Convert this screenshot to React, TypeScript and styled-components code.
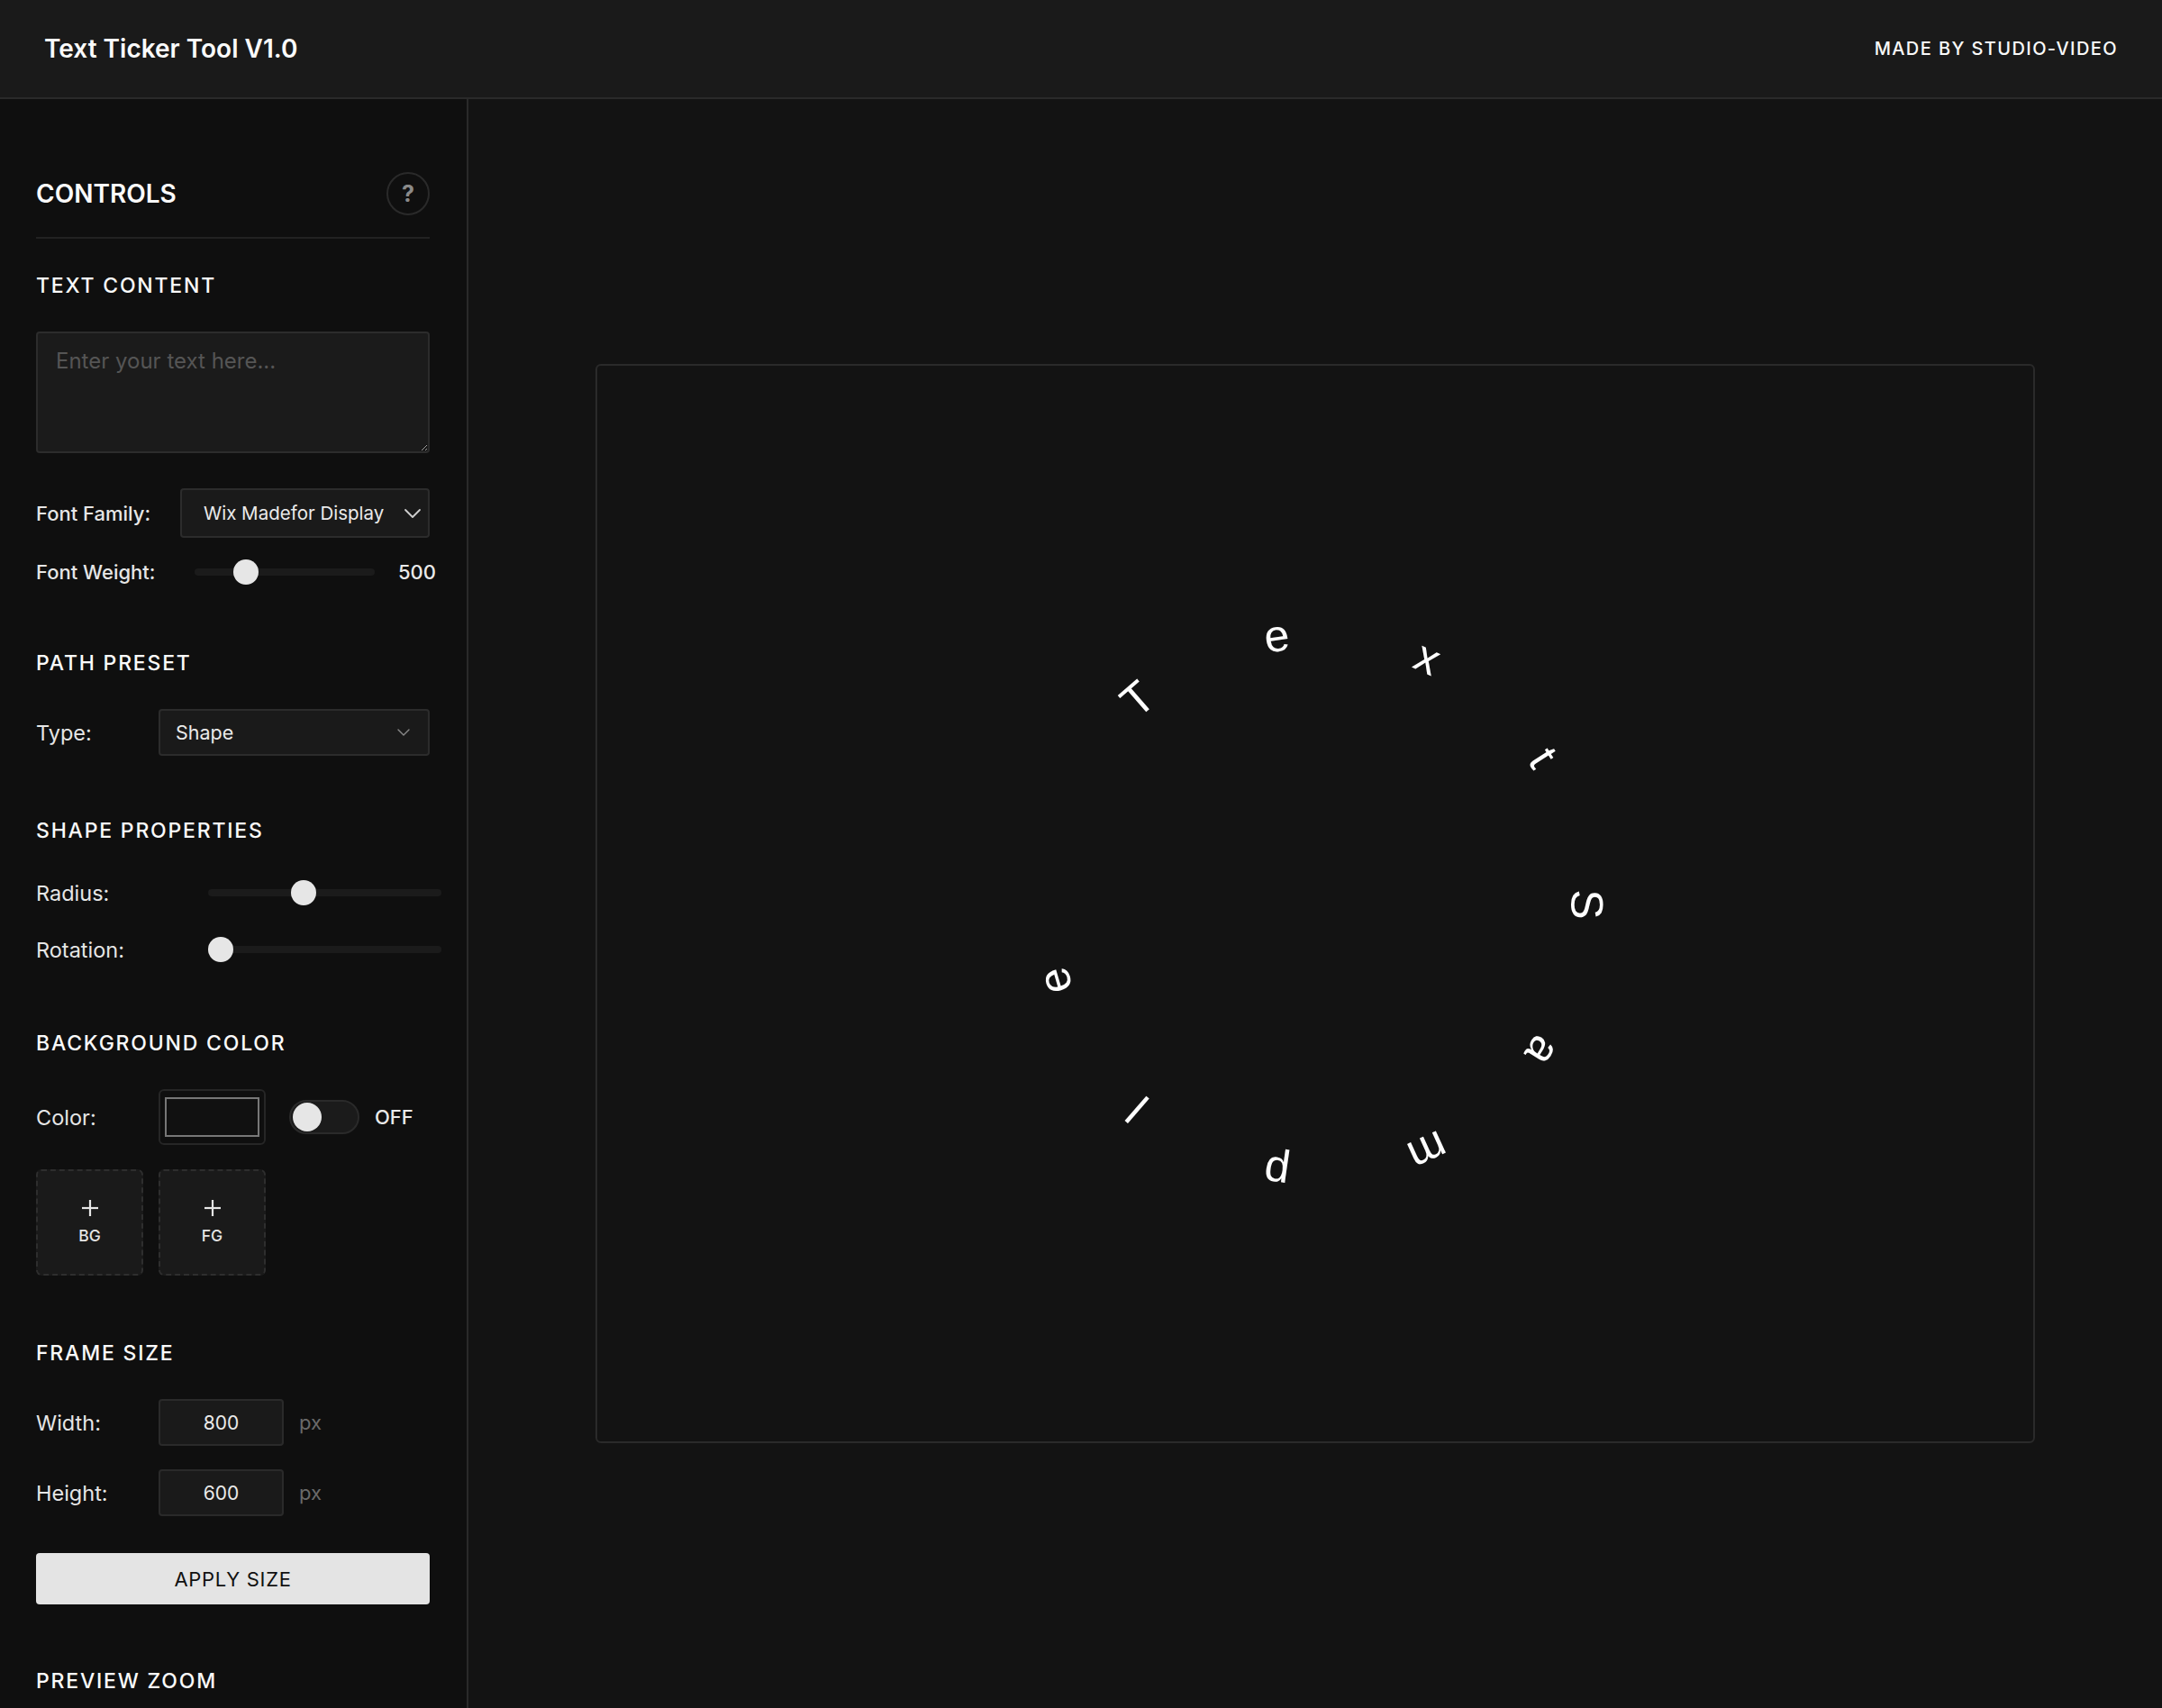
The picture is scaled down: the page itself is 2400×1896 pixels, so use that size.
import styled, { createGlobalStyle } from "styled-components";

const GlobalStyle = createGlobalStyle`
  html, body {
    margin: 0;
    padding: 0;
    background: #131313;
  }
  * {
    box-sizing: border-box;
  }
  body {
    font-family: Inter, "Noto Sans", sans-serif;
    color: #f2f2f2;
  }
`;

const Page = styled.div`
  height: 100vh;
  display: flex;
  flex-direction: column;
  overflow: hidden;
`;

const Header = styled.header`
  height: 110px;
  flex-shrink: 0;
  display: flex;
  align-items: center;
  justify-content: space-between;
  padding: 0 49px 0 49px;
  background: #1a1a1a;
  border-bottom: 2px solid #2a2a2a;
`;

const AppTitle = styled.h1`
  margin: 0;
  font-size: 28px;
  font-weight: 600;
  color: #fafafa;
`;

const Credit = styled.span`
  font-size: 20px;
  font-weight: 500;
  letter-spacing: 1.4px;
  color: #fafafa;
`;

const Body = styled.div`
  flex: 1;
  display: flex;
  min-height: 0;
`;

const Sidebar = styled.aside`
  width: 520px;
  flex-shrink: 0;
  background: #0f0f0f;
  border-right: 2px solid #2a2a2a;
  padding: 81px 41px 40px 40px;
  overflow: hidden;
`;

const PanelHeader = styled.div`
  display: flex;
  align-items: center;
  justify-content: space-between;
  padding-bottom: 24px;
  border-bottom: 2px solid #222;
`;

const PanelTitle = styled.h2`
  margin: 0;
  font-size: 28px;
  font-weight: 600;
  color: #fafafa;
`;

const HelpButton = styled.button`
  width: 48px;
  height: 48px;
  border-radius: 50%;
  border: 2px solid #2a2a2a;
  background: transparent;
  color: #8a8a8a;
  font-family: Inter, sans-serif;
  font-size: 25px;
  font-weight: 700;
  display: flex;
  align-items: center;
  justify-content: center;
  padding: 0;
`;

const Section = styled.section<{ $top: number }>`
  margin-top: ${({ $top }) => $top}px;
`;

const SectionTitle = styled.h3`
  margin: 0 0 36px;
  font-size: 23px;
  line-height: 30px;
  font-weight: 500;
  letter-spacing: 1.8px;
  color: #fafafa;
`;

const Stack = styled.div<{ $gap: number }>`
  display: flex;
  flex-direction: column;
  gap: ${({ $gap }) => $gap}px;
`;

const TextArea = styled.textarea`
  display: block;
  width: 100%;
  height: 135px;
  background: #1b1b1b;
  border: 2px solid #2c2c2c;
  border-radius: 4px;
  padding: 16px 20px;
  font-family: Inter, sans-serif;
  font-size: 24px;
  color: #eee;
  resize: vertical;
  outline: none;

  &::placeholder {
    color: #555;
  }
`;

const Row = styled.div<{ $height?: number }>`
  display: flex;
  align-items: center;
  height: ${({ $height }) => ($height ? `${$height}px` : "auto")};
`;

const Label = styled.label<{ $width: number; $strong?: boolean }>`
  width: ${({ $width }) => $width}px;
  flex-shrink: 0;
  font-size: ${({ $strong }) => ($strong ? "22px" : "23.5px")};
  font-weight: ${({ $strong }) => ($strong ? 500 : 400)};
  color: #e6e6e6;
`;

const SelectBox = styled.div<{ $width: number; $padLeft: number; $padRight: number; $size: number }>`
  width: ${({ $width }) => $width}px;
  flex-shrink: 0;
  height: 100%;
  display: flex;
  align-items: center;
  justify-content: space-between;
  padding: 0 ${({ $padRight }) => $padRight}px 0 ${({ $padLeft }) => $padLeft}px;
  background: #1a1a1a;
  border: 2px solid #2c2c2c;
  border-radius: 4px;
  font-size: ${({ $size }) => $size}px;
  color: #eaeaea;
  white-space: nowrap;

  svg {
    flex-shrink: 0;
  }
`;

const Range = styled.input.attrs({ type: "range" })<{ $width: number }>`
  -webkit-appearance: none;
  appearance: none;
  flex-shrink: 0;
  width: ${({ $width }) => $width}px;
  height: 28px;
  margin: 0;
  background: transparent;

  &::-webkit-slider-runnable-track {
    height: 8px;
    border-radius: 4px;
    background: #1b1b1b;
  }

  &::-webkit-slider-thumb {
    -webkit-appearance: none;
    width: 28px;
    height: 28px;
    margin-top: -10px;
    border-radius: 50%;
    background: #e6e6e6;
    border: none;
  }
`;

const Value = styled.span`
  margin-left: 26px;
  font-size: 22px;
  font-weight: 500;
  color: #eaeaea;
`;

const Swatch = styled.div`
  width: 119px;
  height: 62px;
  padding: 7px 5px;
  border: 2px solid #262626;
  border-radius: 6px;
  background: #0f0f0f;
`;

const SwatchFill = styled.div<{ $color: string }>`
  width: 100%;
  height: 100%;
  background: ${({ $color }) => $color};
  border: 2px solid #777;
`;

const Toggle = styled.div<{ $on: boolean }>`
  width: 78px;
  height: 38px;
  margin-left: 26px;
  border-radius: 19px;
  border: 2px solid #2a2a2a;
  background: #1b1b1b;
  display: flex;
  align-items: center;
  justify-content: ${({ $on }) => ($on ? "flex-end" : "flex-start")};
  padding: 0 2px;
`;

const Knob = styled.span`
  width: 32px;
  height: 32px;
  border-radius: 50%;
  background: #e6e6e6;
`;

const ToggleText = styled.span`
  margin-left: 17px;
  font-size: 22px;
  font-weight: 500;
  color: #eaeaea;
`;

const LayerRow = styled.div`
  display: flex;
  gap: 17px;
`;

const LayerButton = styled.button`
  width: 119px;
  height: 118px;
  border: 2px dashed #2e2e2e;
  border-radius: 6px;
  background: #1a1a1a;
  color: #e6e6e6;
  display: flex;
  flex-direction: column;
  align-items: center;
  justify-content: center;
  gap: 9px;
  padding: 0 0 2px;
  font-family: Inter, sans-serif;
`;

const LayerText = styled.span`
  font-size: 17.5px;
  font-weight: 500;
`;

const NumberInput = styled.input`
  width: 139px;
  height: 52px;
  background: #1a1a1a;
  border: 2px solid #2a2a2a;
  border-radius: 4px;
  text-align: center;
  font-family: Inter, sans-serif;
  font-size: 21px;
  color: #eaeaea;
  outline: none;
`;

const Unit = styled.span`
  margin-left: 17px;
  font-size: 22px;
  color: #6a6a6a;
`;

const ApplyButton = styled.button`
  display: block;
  width: 100%;
  height: 57px;
  margin-top: 41px;
  border: none;
  border-radius: 4px;
  background: #e4e4e4;
  color: #111;
  font-family: Inter, sans-serif;
  font-size: 22px;
  letter-spacing: 0.7px;
`;

const Main = styled.main`
  flex: 1;
  display: flex;
  align-items: center;
  justify-content: center;
  background: #131313;
`;

const Frame = styled.div`
  position: relative;
  width: 1598px;
  height: 1198px;
  border: 2px solid #2a2a2a;
  border-radius: 6px;
  background: #131313;
  overflow: hidden;
`;

const Glyph = styled.span`
  position: absolute;
  font-family: "Liberation Sans", Arial, sans-serif;
  font-size: 50px;
  line-height: 1;
  color: #fff;
  white-space: pre;
`;

const Chevron = ({ size, color }: { size: number; color: string }) => (
  <svg width={size} height={size} viewBox="0 0 24 24" fill="none" stroke={color} strokeWidth={1.8} strokeLinecap="round" strokeLinejoin="round">
    <polyline points="4 8 12 16 20 8" />
  </svg>
);

const Plus = () => (
  <svg width="22" height="22" viewBox="0 0 22 22" stroke="#e6e6e6" strokeWidth="2.2">
    <line x1="11" y1="2" x2="11" y2="20" />
    <line x1="2" y1="11" x2="20" y2="11" />
  </svg>
);

const TICKER = "TextSample ";
const RADIUS = 301;
const START_ANGLE = -130.9;

function TickerPreview() {
  const chars = TICKER.split("");
  const step = 360 / chars.length;
  return (
    <Frame>
      {chars.map((ch, i) => {
        const angle = START_ANGLE + i * step;
        const rad = (angle * Math.PI) / 180;
        const x = 797 + RADIUS * Math.cos(rad);
        const y = 598 + RADIUS * Math.sin(rad);
        return (
          <Glyph
            key={i}
            style={{
              left: x,
              top: y,
              transform: `translate(-50%, -50%) rotate(${angle + 90}deg)`,
            }}
          >
            {ch}
          </Glyph>
        );
      })}
    </Frame>
  );
}

export default function App() {
  return (
    <>
      <GlobalStyle />
      <Page>
        <Header>
          <AppTitle>Text Ticker Tool V1.0</AppTitle>
          <Credit>MADE BY STUDIO-VIDEO</Credit>
        </Header>
        <Body>
          <Sidebar>
            <PanelHeader>
              <PanelTitle>CONTROLS</PanelTitle>
              <HelpButton>?</HelpButton>
            </PanelHeader>

            <Section $top={37}>
              <SectionTitle>TEXT CONTENT</SectionTitle>
              <TextArea placeholder="Enter your text here..." />
              <Stack $gap={24} style={{ marginTop: 39 }}>
                <Row $height={55}>
                  <Label $width={160} $strong>Font Family:</Label>
                  <SelectBox $width={277} $padLeft={24} $padRight={5} $size={20.5}>
                    Wix Madefor Display
                    <Chevron size={24} color="#cfcfcf" />
                  </SelectBox>
                </Row>
                <Row $height={28}>
                  <Label $width={176} $strong>Font Weight:</Label>
                  <Range $width={200} min={400} max={800} defaultValue={500} />
                  <Value>500</Value>
                </Row>
              </Stack>
            </Section>

            <Section $top={72}>
              <SectionTitle>PATH PRESET</SectionTitle>
              <Row $height={52}>
                <Label $width={136}>Type:</Label>
                <SelectBox $width={301} $padLeft={17} $padRight={18} $size={21.5}>
                  Shape
                  <Chevron size={18} color="#8a8a8a" />
                </SelectBox>
              </Row>
            </Section>

            <Section $top={68}>
              <SectionTitle>SHAPE PROPERTIES</SectionTitle>
              <Stack $gap={35} style={{ paddingTop: 4 }}>
                <Row $height={28}>
                  <Label $width={191}>Radius:</Label>
                  <Range $width={259} min={50} max={300} defaultValue={150} />
                </Row>
                <Row $height={28}>
                  <Label $width={191}>Rotation:</Label>
                  <Range $width={259} min={0} max={360} defaultValue={0} />
                </Row>
              </Stack>
            </Section>

            <Section $top={75}>
              <SectionTitle>BACKGROUND COLOR</SectionTitle>
              <Row $height={62}>
                <Label $width={136}>Color:</Label>
                <Swatch>
                  <SwatchFill $color="#111111" />
                </Swatch>
                <Toggle $on={false}>
                  <Knob />
                </Toggle>
                <ToggleText>OFF</ToggleText>
              </Row>
              <LayerRow style={{ marginTop: 27 }}>
                <LayerButton>
                  <Plus />
                  <LayerText>BG</LayerText>
                </LayerButton>
                <LayerButton>
                  <Plus />
                  <LayerText>FG</LayerText>
                </LayerButton>
              </LayerRow>
            </Section>

            <Section $top={71}>
              <SectionTitle>FRAME SIZE</SectionTitle>
              <Stack $gap={26}>
                <Row $height={52}>
                  <Label $width={136}>Width:</Label>
                  <NumberInput defaultValue="800" />
                  <Unit>px</Unit>
                </Row>
                <Row $height={52}>
                  <Label $width={136}>Height:</Label>
                  <NumberInput defaultValue="600" />
                  <Unit>px</Unit>
                </Row>
              </Stack>
              <ApplyButton>APPLY SIZE</ApplyButton>
            </Section>

            <Section $top={70}>
              <SectionTitle>PREVIEW ZOOM</SectionTitle>
            </Section>
          </Sidebar>
          <Main>
            <TickerPreview />
          </Main>
        </Body>
      </Page>
    </>
  );
}
